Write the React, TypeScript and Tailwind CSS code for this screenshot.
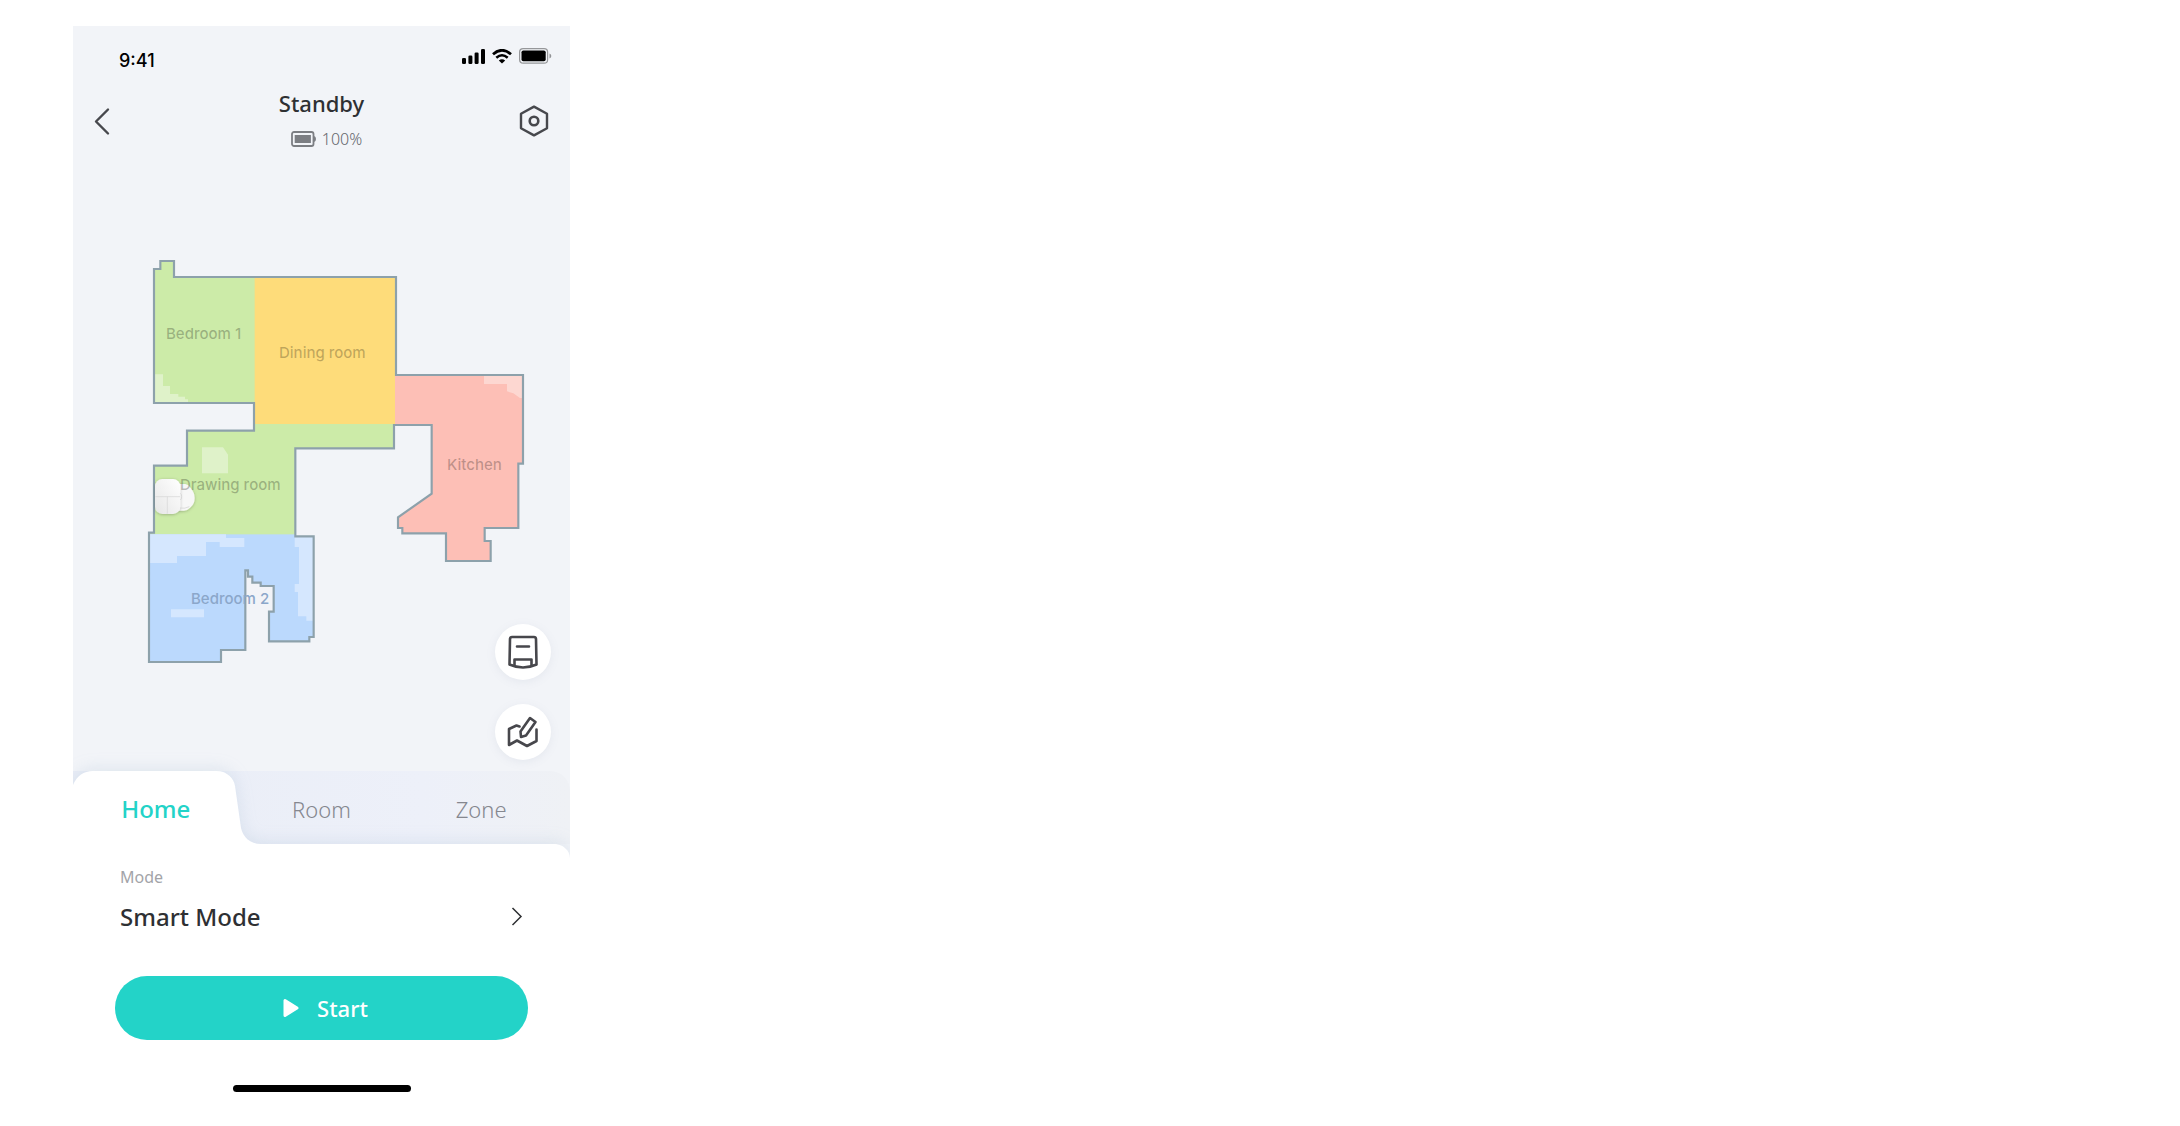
import { useState } from "react";

type Tab = "Home" | "Room" | "Zone";

const tabs: Tab[] = ["Home", "Room", "Zone"];

const OUTLINE =
  "M61 33H102V81H768V375H1149V641H1135V834H1034V873H1052V933H918V850H787V834H774V802L875 731V525H762V595H466V859H521V1161H508V1174H387V1085H401V1008H362V998H337V980H324V961H316V1200H243V1236H27V848H42V647H141V542H342V459H42V57H61Z";

function StatusBar() {
  return (
    <div className="flex h-15 items-center justify-between pl-[46px] pr-[18px]">
      <time className="pt-2.5 text-lg font-medium text-black [font-family:Inter,sans-serif]">9:41</time>
      <div className="flex items-center gap-[7px]">
        <svg width="23" height="15" viewBox="0 0 23 15" aria-hidden>
          <rect x="0" y="9" width="4" height="6" rx="1.3" />
          <rect x="6.4" y="6.500" width="4" height="8.500" rx="1.3" />
          <rect x="12.600" y="3.500" width="4" height="11.500" rx="1.3" />
          <rect x="19" y="0" width="4" height="15" rx="1.3" />
        </svg>
        <svg width="20" height="15" viewBox="0 0 20 15" fill="none" stroke="#000" aria-hidden>
          <path d="M1 5.200Q10 -2.600 19 5.200" strokeWidth="2.800" />
          <path d="M4.300 8.700Q10 3.800 15.700 8.700" strokeWidth="2.600" />
          <path d="M6.800 11.400Q10 9 13.200 11.400L10 14.600Z" fill="#000" stroke="none" />
        </svg>
        <svg width="33" height="16" viewBox="0 0 33 16" aria-hidden>
          <rect x=".6" y=".6" width="28" height="14.600" rx="3.500" fill="none" stroke="#000" strokeOpacity=".38" strokeWidth="1.200" />
          <rect x="2.500" y="2.500" width="24.200" height="10.800" rx="1.800" />
          <path d="M30.500 5.500Q32.300 6.200 32.300 8T30.500 10.500Z" fillOpacity=".4" />
        </svg>
      </div>
    </div>
  );
}

function Header() {
  return (
    <header className="flex h-[70px] items-center justify-between px-5">
      <button type="button" aria-label="Back" className="w-8">
        <svg width="20" height="30" viewBox="0 0 20 30" fill="none" stroke="#47484d" strokeWidth="2.400" strokeLinecap="round" strokeLinejoin="round">
          <path d="M15 3.500L3 15.500L15 27.500" />
        </svg>
      </button>
      <div className="flex flex-col items-end pb-1">
        <h1 className="text-[22px] leading-8 font-medium text-[#2e3033]">Standby</h1>
        <p className="flex items-center gap-1.5 pt-2 pr-0.5 text-[16px] leading-6 font-light text-[#66676c]">
          <svg width="25" height="16" viewBox="0 0 25 16" aria-hidden>
            <rect x="1" y="1" width="21.500" height="14" rx="2" fill="none" stroke="#7c7e83" strokeWidth="1.800" />
            <rect x="3.700" y="4" width="16.200" height="8" fill="#7c7e83" />
            <path d="M23 5Q25 5.500 25 8T23 11Z" fill="#7c7e83" />
          </svg>
          100%
        </p>
      </div>
      <button type="button" aria-label="Settings" className="flex w-8 justify-center">
        <svg width="32" height="34" viewBox="0 0 32 34" fill="none" stroke="#47484d" strokeWidth="2.400" strokeLinejoin="round">
          <path d="M16 2.600L29 9.700V24.300L16 31.400L3 24.300V9.700Z" />
          <circle cx="16" cy="17" r="4.300" strokeWidth="2.600" />
        </svg>
      </button>
    </header>
  );
}

function FloorMap() {
  return (
    <div className="relative ml-[67px] w-[400px] text-[15px] leading-5 font-medium text-black/25 [font-family:Inter,sans-serif]">
      <svg viewBox="0 0 1200 1260" className="block w-full" aria-hidden>
        <defs>
          <clipPath id="floor">
            <path d={OUTLINE} />
          </clipPath>
          <linearGradient id="dock" x1="0" x2="1" y1="1" y2="0">
            <stop offset="0" stopColor="#e6e6e6" />
            <stop offset="1" stopColor="#ffffff" />
          </linearGradient>
          <filter id="soft" x="-30%" y="-30%" width="160%" height="160%">
            <feDropShadow dx="0" dy="2" stdDeviation="4" floodOpacity=".25" />
          </filter>
        </defs>
        <g clipPath="url(#floor)">
          <rect width="1200" height="1260" fill="#cceba8" />
          <rect x="344" y="70" width="421" height="452" fill="#fedc7a" />
          <path d="M765 360H1200V960H765Z" fill="#fdbfb6" />
          <rect y="853" width="600" height="407" fill="#bbd9fd" />
          <path d="M45 373H69V408H90V432H115V440H135V448H144V459H42Z" fill="#dff2c9" />
          <path d="M186 592H249L264 614V670H186Z" fill="#dff2c9" />
          <path d="M1032 378H1149V444H1140L1120 430L1101 424V402H1032Z" fill="#fdd7d1" />
          <path d="M27 853H258V864H313V891H239V876H198V918H111V939H27Z" fill="#d5e7fe" />
          <path d="M464 853H521V1112H499V1099H474V1026H464V1002H477V891H464Z" fill="#d5e7fe" />
          <path d="M93 1078H192V1102H93Z" fill="#d5e7fe" />
        </g>
        <path d={OUTLINE} fill="none" stroke="#8da1ab" strokeWidth="6.500" />
        <path
          d="M120 702H136Q146 704 152 714Q164 728 164 744Q164 762 152 772Q144 781 132 782H116Z"
          fill="#f7f7f7"
          filter="url(#soft)"
        />
        <rect x="45" y="687" width="76" height="105" rx="22" fill="url(#dock)" filter="url(#soft)" />
        <path d="M46 740H120M82 740V791" stroke="#d4d4d4" strokeWidth="2" />
        <path d="M121 730Q125 732 125 740T121 750M120 774Q134 777 148 770" fill="none" stroke="#cfcfcf" strokeWidth="2" />
      </svg>
      <span className="absolute left-[26px] top-[74px]">Bedroom 1</span>
      <span className="absolute left-[139px] top-[93px]">Dining room</span>
      <span className="absolute left-[307px] top-[205px]">Kitchen</span>
      <span className="absolute left-10 top-[225px]">Drawing room</span>
      <span className="absolute left-[51px] top-[339px] text-[#8ba7ca]">Bedroom 2</span>
    </div>
  );
}

function MapActions() {
  const round =
    "flex size-14 items-center justify-center rounded-full bg-white shadow-[0_2px_10px_rgba(120,130,160,0.1)]";
  return (
    <div className="absolute right-[19px] bottom-[11px] flex flex-col gap-6">
      <button type="button" aria-label="Return to dock" className={round}>
        <svg width="32" height="34" viewBox="0 0 32 34" fill="none" stroke="#47474c" strokeWidth="2.600" strokeLinejoin="round" strokeLinecap="round">
          <path d="M5 2H27Q28.800 2 29 4L29.500 29.500Q23 32.500 16 32.500T2.500 29.500L3 4Q3.200 2 5 2Z" />
          <path d="M10 11.500H22M7.500 30.500V24.500H24.500V30.500" />
        </svg>
      </button>
      <button type="button" aria-label="Edit map" className={round}>
        <svg width="32" height="32" viewBox="0 0 32 32" fill="none" stroke="#47474c" strokeWidth="2.600" strokeLinejoin="round" strokeLinecap="round">
          <path d="M12.500 10.500L9.500 9.500L2 13V29L10 24.500L20 30L29.500 25V13.500" />
          <path d="M23 2L28.500 6L19 19.500L14 21L13.500 15.500Z" />
        </svg>
      </button>
    </div>
  );
}

function TabBar({ active, onSelect }: { active: Tab; onSelect: (tab: Tab) => void }) {
  return (
    <nav className="relative isolate h-[73px] rounded-tr-[20px] bg-linear-to-r from-[#e9edf6] via-[#edf0f9] via-70% to-[#eff1f5]">
      {/* white sheet with the raised tab */}
      <svg
        viewBox="0 0 497 92"
        preserveAspectRatio="none"
        className="absolute inset-x-0 top-0 -z-10 h-[92px] w-full [clip-path:inset(-30px_0_0_0)] overflow-visible"
        aria-hidden
      >
        <path
          d="M0 92V14Q6 0 20 0H143C155 0 161 8 162 15L168 57C170 66 177 73 188 73H480C490 73 497 79 497 88V92Z"
          fill="#fff"
          className="drop-shadow-[0_-2px_8px_rgba(130,160,195,0.18)]"
        />
      </svg>
      <div role="tablist" className="grid h-full grid-cols-[14fr_14fr_13fr] pr-3">
        {tabs.map((tab) => (
          <button
            key={tab}
            type="button"
            role="tab"
            aria-selected={tab === active}
            onClick={() => onSelect(tab)}
            className={
              tab === active
                ? "pt-0.5 text-[24px] leading-8 font-medium text-[#23d3c8]"
                : "pt-0.5 text-[22px] leading-8 font-light text-[#85878f]"
            }
          >
            {tab}
          </button>
        ))}
      </div>
    </nav>
  );
}

export default function App() {
  const [tab, setTab] = useState<Tab>("Home");

  return (
    <div className="min-h-screen bg-white px-4 pt-[26px] pb-[22px] [font-family:'Noto_Sans',sans-serif] md:pl-[73px]">
      <main className="w-full max-w-[497px] bg-[#f2f4f8]">
        <StatusBar />
        <Header />
        <section aria-label="Map" className="relative pt-[94px] pb-[101px]">
          <FloorMap />
          <MapActions />
        </section>
        <TabBar active={tab} onSelect={setTab} />
        {/* the sheet's rounded corner belongs to the tab bar drawing */}
        <section className="relative rounded-tr-[18px] bg-white px-[42px] pt-[21px]">
          <button type="button" className="flex w-full items-end justify-between px-[5px] text-left">
            <span className="flex flex-col gap-3">
              <span className="text-[16px] leading-6 text-[#a3a4a8]">Mode</span>
              <span className="text-[24px] leading-8 font-medium text-[#2e3033]">Smart Mode</span>
            </span>
            <svg width="12" height="32" viewBox="0 0 12 32" fill="none" stroke="#2e3033" strokeWidth="1.500" aria-hidden>
              <path d="M1.500 7L10 15.500L1.500 24" />
            </svg>
          </button>
          <button
            type="button"
            className="mt-[43px] flex h-16 w-full items-center justify-center gap-[18px] rounded-full bg-[#23d3c8] pl-2 text-[22px] font-medium text-white"
          >
            <svg width="16" height="20" viewBox="0 0 16 20" fill="#fff" stroke="#fff" strokeWidth="3" strokeLinejoin="round" aria-hidden>
              <path d="M2 2.500V17.500L14 10Z" />
            </svg>
            Start
          </button>
          <div className="mx-auto mt-[45px] h-[7px] w-[178px] rounded-full bg-black" />
        </section>
      </main>
    </div>
  );
}
